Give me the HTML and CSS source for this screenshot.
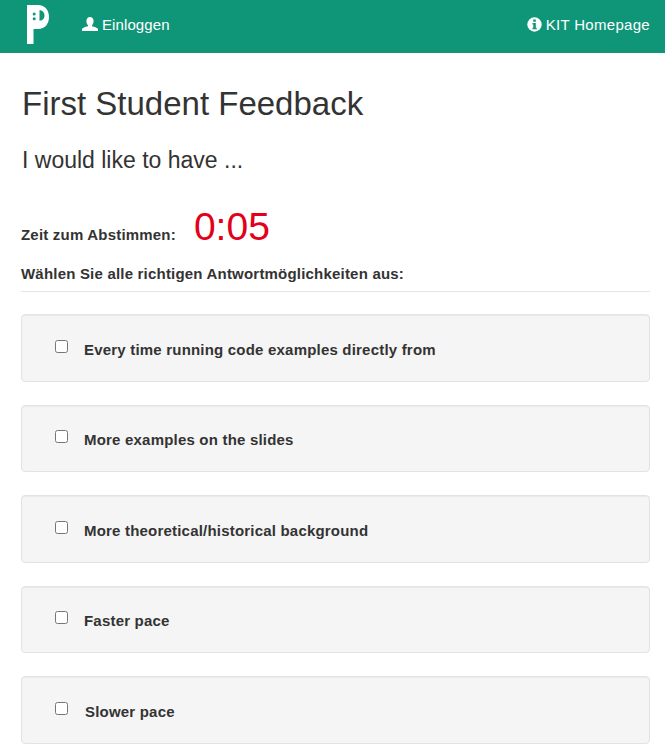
FILE: index.html
```html
<!DOCTYPE html>
<html lang="en">
<head>
  <meta charset="UTF-8">
  <meta name="viewport" content="width=device-width, initial-scale=1.0">
  <title>First Student Feedback</title>
  <link rel="stylesheet" href="styles.css">
</head>
<body>
  <nav class="navbar">
    <svg class="logo" width="24" height="40" viewBox="0 0 24 40">
      <path fill="#fff" d="M1 0H12C19 0 23 5 23 12C23 19 19 24 12 24H7.500V39H1Z"/>
      <circle fill="#0f9679" cx="8.200" cy="9" r="1.500"/>
      <circle fill="#0f9679" cx="8.200" cy="13.700" r="1.500"/>
      <path fill="#0f9679" d="M13.500 5.300C17 5.300 18.500 8 18.500 10.600C18.500 13.300 17 15.800 13.500 15.800Z"/>
    </svg>
    <a class="nav-link nav-login">
      <svg class="nav-icon" width="16" height="16" viewBox="0 0 16 16">
        <path fill="#fff" d="M8 1C10.300 1 11.600 2.700 11.600 5C11.600 6.800 10.900 8.300 10 9.200V10.300C12.500 11 16 11.800 16 13.500V15H0V13.500C0 11.800 3.500 11 6 10.300V9.200C5.100 8.300 4.400 6.800 4.400 5C4.400 2.700 5.700 1 8 1Z"/>
      </svg>
      Einloggen
    </a>
    <a class="nav-link nav-home">
      <svg class="nav-icon" width="15" height="15" viewBox="0 0 15 15">
        <circle fill="#fff" cx="7.500" cy="7.500" r="7.200"/>
        <path fill="#0f9679" d="M6.200 2.500H8.800V4.700H6.200ZM5.500 6H8.800V10.700H9.700V12.300H5.500V10.700H6.300V7.600H5.500Z"/>
      </svg>
      KIT Homepage
    </a>
  </nav>

  <div class="container">
    <h2 class="title">First Student Feedback</h2>
    <h4 class="question">I would like to have ...</h4>

    <div class="timer-row">
      <label class="timer-label">Zeit zum Abstimmen:</label>
      <span class="timer">0:05</span>
    </div>

    <label class="hint">Wählen Sie alle richtigen Antwortmöglichkeiten aus:</label>
    <hr class="divider">

    <div class="option-well">
      <input type="checkbox">
      <span class="option-text">Every time running code examples directly from</span>
    </div>
    <div class="option-well">
      <input type="checkbox">
      <span class="option-text">More examples on the slides</span>
    </div>
    <div class="option-well">
      <input type="checkbox">
      <span class="option-text">More theoretical/historical background</span>
    </div>
    <div class="option-well">
      <input type="checkbox">
      <span class="option-text">Faster pace</span>
    </div>
    <div class="option-well">
      <input type="checkbox">
      <span class="option-text option-text-last">Slower pace</span>
    </div>
  </div>
</body>
</html>
```

FILE: styles.css
```css
body {
  font-family: "Liberation Sans", Arial, sans-serif;
  font-size: 15px;
  margin: 0;
  padding: 0;
  background-color: #fff;
  color: #333;
}

.navbar {
  display: flex;
  align-items: center;
  height: 53px;
  padding: 0 15px 0 26px;
  background-color: #0f9679;
  box-sizing: border-box;
}

.logo {
  flex: none;
  margin-top: -3px;
}

.nav-link {
  display: flex;
  align-items: center;
  gap: 4px;
  font-size: 15px;
  color: #fff;
  margin-top: -5px;
}

.nav-login {
  margin-left: 32px;
  letter-spacing: 0.1px;
}

.nav-home {
  margin-left: auto;
  letter-spacing: 0.3px;
}

.container {
  padding: 0 15px 0 21px;
}

.title {
  font-size: 33px;
  font-weight: normal;
  line-height: 36px;
  margin: 33px 0 0;
  padding-left: 1px;
}

.question {
  font-size: 23px;
  font-weight: normal;
  line-height: 26px;
  margin: 25px 0 0;
  padding-left: 1px;
}

.timer-row {
  display: flex;
  align-items: baseline;
  margin-top: 32px;
}

.timer-label {
  font-weight: bold;
  letter-spacing: 0.2px;
}

.timer {
  font-size: 39px;
  line-height: 44px;
  color: #e2001a;
  margin-left: 18px;
}

.hint {
  display: block;
  font-weight: bold;
  letter-spacing: 0.2px;
  line-height: 20px;
  margin-top: 15px;
}

.divider {
  border: none;
  border-top: 1px solid #e5e5e5;
  margin: 7px 0 22px;
}

.option-well {
  display: flex;
  align-items: center;
  height: 67.500px;
  margin-bottom: 23px;
  padding-left: 33px;
  background-color: #f5f5f5;
  border: 1px solid #e3e3e3;
  border-radius: 4px;
  box-sizing: border-box;
  box-shadow: inset 0 1px 1px rgba(0, 0, 0, 0.05);
}

.option-well input {
  width: 13px;
  height: 13px;
  margin: -3px 16px 0 0;
  flex: none;
}

.option-text {
  font-weight: bold;
  letter-spacing: 0.2px;
  margin-top: 3px;
}

.option-text-last {
  margin-left: 1px;
}
```
